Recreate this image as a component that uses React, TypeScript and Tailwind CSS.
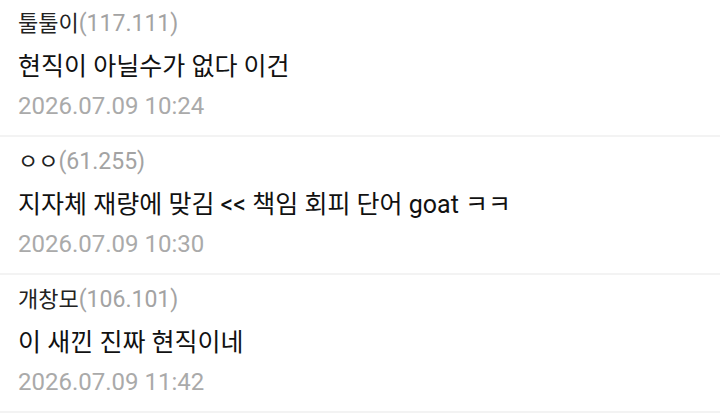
const comments = [
  { name: '툴툴이', ip: '117.111', body: '현직이 아닐수가 없다 이건', date: '2026.07.09 10:24' },
  { name: 'ㅇㅇ', ip: '61.255', body: '지자체 재량에 맞김 << 책임 회피 단어 goat ㅋㅋ', date: '2026.07.09 10:30' },
  { name: '개창모', ip: '106.101', body: '이 새낀 진짜 현직이네', date: '2026.07.09 11:42' },
];

export default function App() {
  return (
    <div
      className="w-[720px] h-[413px] bg-white overflow-hidden"
      style={{ fontFamily: 'Roboto, "Noto Sans CJK KR", sans-serif' }}
    >
      {comments.map((c, i) => (
        <div
          key={c.date}
          className={`border-b-2 border-[#f3f3f3] px-[18px] ${i === 0 ? 'pt-[8px] h-[137px]' : 'pt-[9px] h-[138px]'}`}
        >
          <div className="h-[32px] leading-[32px] text-[22px] text-[#222]">
            {c.name}
            <span className="text-[23px] text-[#a3a3a3]">({c.ip})</span>
          </div>
          <div className="mt-[8px] h-[38px] leading-[38px] text-[25px] text-[#111]">{c.body}</div>
          <div className="mt-[8px] h-[24px] leading-[24px] text-[24px] text-[#aaaaaa]">{c.date}</div>
        </div>
      ))}
    </div>
  );
}
